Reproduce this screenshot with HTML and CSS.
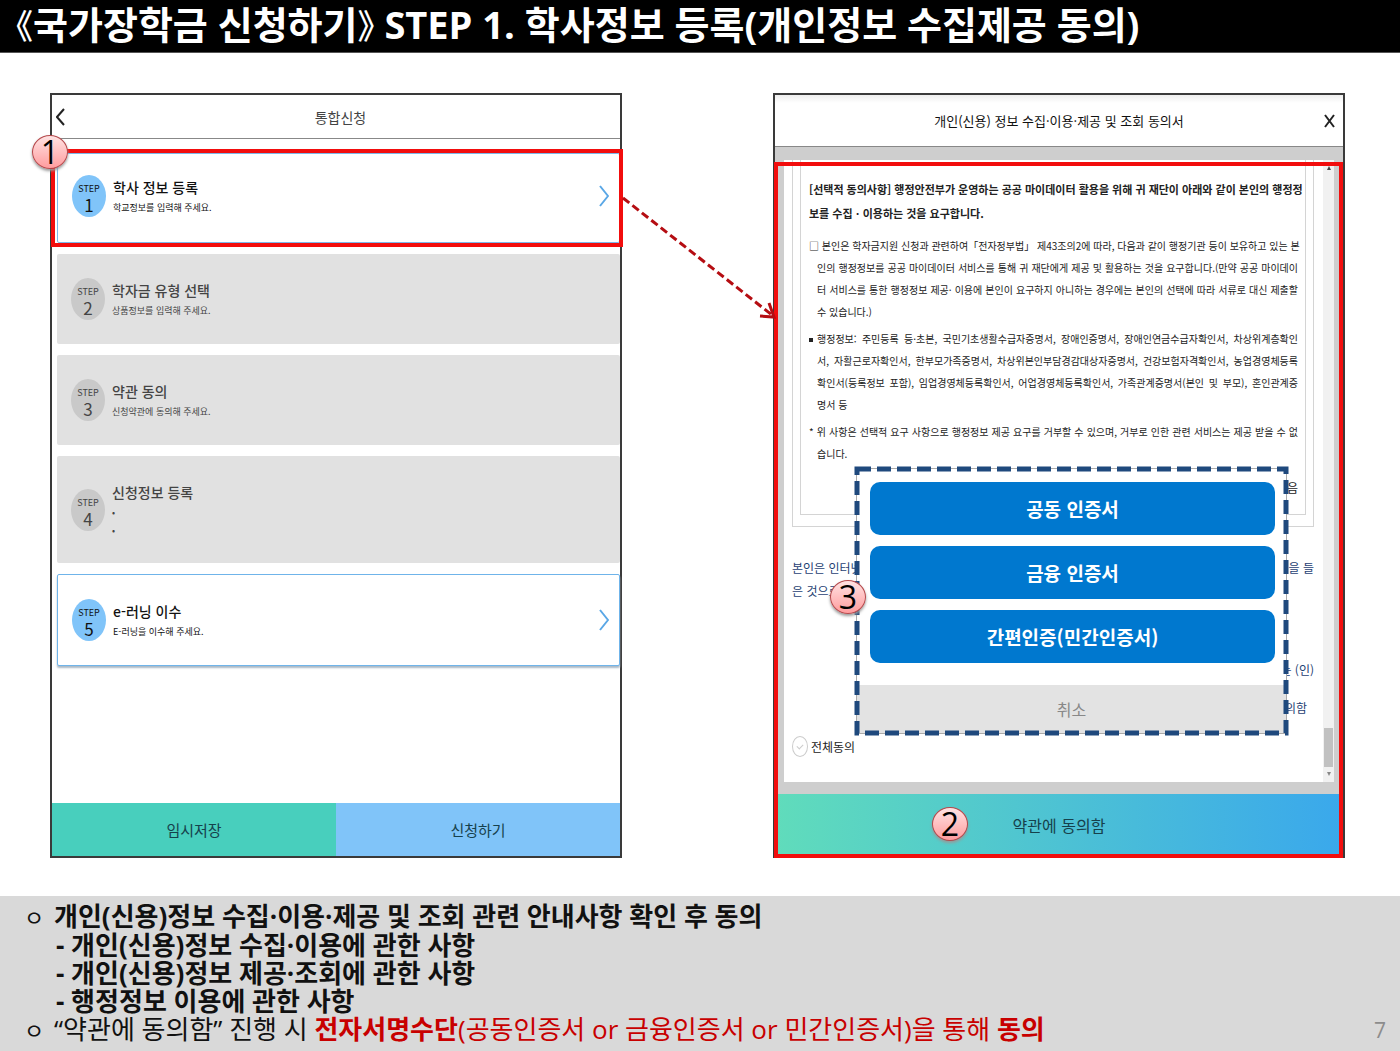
FILE: index.html
```
<!DOCTYPE html>
<html lang="ko">
<head>
    <meta charset="UTF-8">
    <meta name="viewport" content="width=device-width, initial-scale=1.0">
    <title>국가장학금 신청하기</title>
    <link rel="stylesheet" href="styles.css">
</head>
<body>
    <header class="slide-title">
        <h1><span class="bracket">《</span>국가장학금 신청하기<span class="bracket">》</span> STEP 1. 학사정보 등록(개인정보 수집제공 동의)</h1>
    </header>

    <main class="stage">
        <!-- 통합신청 화면 -->
        <section class="panel">
            <div class="panel-head apply-head">
                <button class="back" type="button" aria-label="뒤로">
                    <svg width="9" height="18" viewBox="0 0 9 18"><path d="M8 1 L1 9 L8 17"/></svg>
                </button>
                <h2>통합신청</h2>
            </div>

            <ol class="steps">
                <li class="step active current">
                    <span class="badge"><small>STEP</small><b>1</b></span>
                    <div class="step-text">
                        <h3>학사 정보 등록</h3>
                        <p>학교정보를 입력해 주세요.</p>
                    </div>
                    <svg class="chevron" width="10" height="22" viewBox="0 0 10 22"><path d="M1 1 L9 11 L1 21"/></svg>
                    <span class="highlight"></span>
                    <span class="marker marker-1">1</span>
                </li>
                <li class="step">
                    <span class="badge"><small>STEP</small><b>2</b></span>
                    <div class="step-text">
                        <h3>학자금 유형 선택</h3>
                        <p>상품정보를 입력해 주세요.</p>
                    </div>
                </li>
                <li class="step">
                    <span class="badge"><small>STEP</small><b>3</b></span>
                    <div class="step-text">
                        <h3>약관 동의</h3>
                        <p>신청약관에 동의해 주세요.</p>
                    </div>
                </li>
                <li class="step tall">
                    <span class="badge"><small>STEP</small><b>4</b></span>
                    <div class="step-text">
                        <h3>신청정보 등록</h3>
                        <p>•</p>
                        <p>•</p>
                    </div>
                </li>
                <li class="step active shadow">
                    <span class="badge"><small>STEP</small><b>5</b></span>
                    <div class="step-text">
                        <h3>e-러닝 이수</h3>
                        <p>E-러닝을 이수해 주세요.</p>
                    </div>
                    <svg class="chevron" width="10" height="22" viewBox="0 0 10 22"><path d="M1 1 L9 11 L1 21"/></svg>
                </li>
            </ol>

            <div class="actions">
                <button class="save" type="button">임시저장</button>
                <button class="submit" type="button">신청하기</button>
            </div>
        </section>

        <!-- 화살표 -->
        <svg class="arrow" width="154" height="126" viewBox="0 0 154 126">
            <path d="M1 2 L150 119" stroke-dasharray="8 4"/>
            <path d="M147 107 L152 121 L138 120"/>
        </svg>

        <!-- 동의서 화면 -->
        <section class="panel">
            <div class="panel-head consent-head">
                <h2>개인(신용) 정보 수집·이용·제공 및 조회 동의서</h2>
                <button class="close" type="button" aria-label="닫기">
                    <svg width="11" height="14" viewBox="0 0 11 14"><path d="M1 1 L10 13 M10 1 L1 13"/></svg>
                </button>
            </div>

            <div class="consent">
                <div class="doc">
                    <div class="doc-body">
                        <div class="frame">
                            <div class="terms">
                                <h3>
                                    <span>[선택적 동의사항] 행정안전부가 운영하는 공공 마이데이터 활용을 위해 귀 재단이 아래와 같이 본인의 행정정</span>
                                    <span>보를 수집ㆍ이용하는 것을 요구합니다.</span>
                                </h3>
                                <p>
                                    <span class="full first">□ 본인은 학자금지원 신청과 관련하여「전자정부법」 제43조의2에 따라, 다음과 같이 행정기관 등이 보유하고 있는 본</span>
                                    <span class="full">인의 행정정보를 공공 마이데이터 서비스를 통해 귀 재단에게 제공 및 활용하는 것을 요구합니다.(만약 공공 마이데이</span>
                                    <span class="full">터 서비스를 통한 행정정보 제공· 이용에 본인이 요구하지 아니하는 경우에는 본인의 선택에 따라 서류로 대신 제출할</span>
                                    <span>수 있습니다.)</span>
                                </p>
                                <p>
                                    <span class="full first"><i class="square"></i>행정정보: 주민등록 등·초본, 국민기초생활수급자증명서, 장애인증명서, 장애인연금수급자확인서, 차상위계층확인</span>
                                    <span class="full">서, 자활근로자확인서, 한부모가족증명서, 차상위본인부담경감대상자증명서, 건강보험자격확인서, 농업경영체등록</span>
                                    <span class="full">확인서(등록정보 포함), 임업경영체등록확인서, 어업경영체등록확인서, 가족관계증명서(본인 및 부모), 혼인관계증</span>
                                    <span>명서 등</span>
                                </p>
                                <p>
                                    <span class="full first">* 위 사항은 선택적 요구 사항으로 행정정보 제공 요구를 거부할 수 있으며, 거부로 인한 관련 서비스는 제공 받을 수 없</span>
                                    <span>습니다.</span>
                                </p>
                                <p class="choice">음</p>
                            </div>
                        </div>
                        <div class="statement">
                            <p><span>본인은 인터넷</span><span>것을 들</span></p>
                            <p><span>은 것으로</span></p>
                        </div>
                        <p class="sign">는 (인)</p>
                        <p class="agree">동의함</p>
                        <label class="all"><input type="checkbox">전체동의</label>
                    </div>
                    <div class="scrollbar"><i class="up"></i><i class="thumb"></i><i class="down"></i></div>
                </div>

                <button class="accept" type="button">약관에 동의함</button>
                <span class="highlight"></span>
                <span class="marker marker-2">2</span>

                <!-- 인증서 선택 팝업 -->
                <div class="popup">
                    <div class="certs">
                        <button type="button">공동 인증서</button>
                        <button type="button">금융 인증서</button>
                        <button type="button">간편인증(민간인증서)</button>
                    </div>
                    <button class="cancel" type="button">취소</button>
                    <svg class="dashes"><rect width="100%" height="100%"/></svg>
                    <span class="marker marker-3">3</span>
                </div>
            </div>
        </section>
    </main>

    <footer class="notes">
        <ul>
            <li class="strong"><span class="bullet">ㅇ</span>개인(신용)정보 수집·이용·제공 및 조회 관련 안내사항 확인 후 동의
                <ul>
                    <li>- 개인(신용)정보 수집·이용에 관한 사항</li>
                    <li>- 개인(신용)정보 제공·조회에 관한 사항</li>
                    <li>- 행정정보 이용에 관한 사항</li>
                </ul>
            </li>
            <li><span class="bullet">ㅇ</span>“약관에 동의함” 진행 시 <em><b>전자서명수단</b>(공동인증서 or 금융인증서 or 민간인증서)을 통해 <b>동의</b></em></li>
        </ul>
        <span class="page">7</span>
    </footer>
</body>
</html>
```
FILE: styles.css
```
* {
    margin: 0;
    padding: 0;
    box-sizing: border-box;
}

body {
    min-height: 100vh;
    display: flex;
    flex-direction: column;
    background: #fff;
    color: #111;
    font-family: "Noto Sans CJK KR", sans-serif;
}

button {
    border: 0;
    background: none;
    font-family: inherit;
    color: inherit;
    cursor: pointer;
}

ul, ol {
    list-style: none;
}

svg {
    display: block;
    fill: none;
}

/* 제목 */
.slide-title {
    height: 53px;
    background: #000;
    border-bottom: 1px solid #555;
    padding: 0 16px;
}

.slide-title h1 {
    color: #fff;
    font-family: "Open Sans", "Noto Sans CJK KR", sans-serif;
    font-size: 38px;
    font-weight: 700;
    line-height: 48px;
    white-space: nowrap;
}

.bracket {
    font-family: "Noto Sans CJK KR", sans-serif;
    font-size: 34px;
    font-weight: 500;
    font-feature-settings: "halt";
    line-height: 1;
}

.stage {
    flex: 1;
    display: grid;
    grid-template-columns: minmax(0, 1fr) 151px minmax(0, 1fr);
    padding: 40px 55px 38px 50px;
}

.panel {
    display: flex;
    flex-direction: column;
    border: 2px solid #3a3a3a;
}

.panel-head {
    display: flex;
    align-items: center;
    border-bottom: 1px solid #888;
}

.panel-head h2 {
    flex: 1;
    text-align: center;
    font-weight: 400;
}

.panel-head path {
    stroke: #222;
    stroke-width: 2;
}

.apply-head {
    height: 44px;
    padding: 0 4px;
}

.apply-head h2 {
    font-size: 14px;
    color: #444;
}

/* 단계 목록 */
.steps {
    display: flex;
    flex-direction: column;
    gap: 11px;
    padding: 14px 0 0 5px;
}

.step {
    position: relative;
    display: flex;
    align-items: center;
    gap: 7px;
    height: 90px;
    padding: 0 10px 0 14px;
    border-radius: 2px;
    background: #e1e1e1;
    color: #444;
}

.step.active {
    border: 1px solid #7cb8ea;
    background: #fff;
    color: #111;
}

.step.current {
    padding-bottom: 4px;
}

.step.tall {
    height: 107px;
}

.step.shadow {
    height: 92px;
    border-color: #6fb4ea;
    box-shadow: 0 2px 2px #aab9c6;
}

.badge {
    display: flex;
    flex-direction: column;
    align-items: center;
    width: 34px;
    height: 42px;
    padding-top: 8px;
    border-radius: 50%;
    background: #c9c9c9;
}

.active .badge {
    background: #80c4f9;
}

.badge small {
    font-size: 9px;
    line-height: 12px;
}

.badge b {
    font-size: 17px;
    font-weight: 400;
    line-height: 20px;
}

.step-text {
    flex: 1;
}

.step-text h3 {
    font-size: 14px;
    font-weight: 500;
    line-height: 24px;
}

.step-text p {
    font-size: 9px;
    line-height: 18px;
}

.chevron path {
    stroke: #5aa7e6;
    stroke-width: 2;
}

.actions {
    display: flex;
    margin-top: auto;
}

.actions button {
    flex: 1;
    height: 53px;
    font-size: 15px;
    color: #16414c;
}

.actions .save {
    background: #48cfbd;
}

.actions .submit {
    background: #80c4f9;
}

/* 강조 상자와 번호 */
.highlight {
    position: absolute;
    border: 4px solid #f20d0d;
    pointer-events: none;
}

.step .highlight {
    inset: -5px -4px -5px -7px;
}

.marker {
    position: absolute;
    width: 36px;
    height: 34px;
    border: 1px solid #b5484b;
    border-radius: 50%;
    background: linear-gradient(#ffe3e3, #ff9c9e);
    box-shadow: 0 2px 3px #999;
    color: #000;
    font-family: "Open Sans", sans-serif;
    font-size: 32px;
    line-height: 32px;
    text-align: center;
}

.marker-1 {
    left: -26px;
    top: -19px;
}

.marker-2 {
    left: 157px;
    bottom: 15px;
}

.marker-3 {
    left: -27px;
    top: 111px;
}

.arrow {
    margin-top: 103px;
    z-index: 2;
}

.arrow path {
    stroke: #b50d12;
    stroke-width: 3;
}

/* 동의서 */
.consent-head {
    height: 52px;
    padding: 0 8px 0 19px;
    background: linear-gradient(#eee, #fff 8px);
}

.consent-head h2 {
    font-size: 13px;
}

.consent {
    position: relative;
    flex: 1;
    display: flex;
    flex-direction: column;
    background: #cecece;
}

.consent > .highlight {
    inset: 15px 0 -2px -1px;
}

.doc {
    flex: 1;
    display: flex;
    margin: 13px 9px 12px;
    background: #fff;
}

.doc-body {
    flex: 1;
    min-width: 0;
    padding: 0 9px 0 8px;
    font-size: 12px;
    line-height: 23px;
    color: #1f3f73;
}

.frame {
    padding: 0 7px 11px;
    border: 1px solid #d4d4d4;
    border-top: 0;
}

.terms {
    padding: 17px 7px 15px 8px;
    border: 1px solid #d4d4d4;
    border-top: 0;
    color: #222;
    font-size: 10px;
    line-height: 22px;
    white-space: nowrap;
}

.terms h3 {
    margin-bottom: 10px;
    font-size: 11px;
    line-height: 24px;
}

.terms p {
    margin-bottom: 5px;
    padding-left: 8px;
}

.terms span {
    display: block;
}

.terms .full {
    text-align-last: justify;
}

.terms .first {
    margin-left: -8px;
}

.square {
    display: inline-block;
    width: 4px;
    height: 4px;
    margin-right: 4px;
    background: #222;
    vertical-align: middle;
}

.terms .choice {
    margin: 12px 0 0;
    font-size: 12px;
    text-align: right;
}

.statement {
    margin-top: 29px;
}

.statement p {
    display: flex;
    justify-content: space-between;
}

.sign {
    margin-top: 56px;
    text-align: right;
}

.agree {
    margin-top: 15px;
    padding-right: 7px;
    text-align: right;
}

.all {
    display: flex;
    align-items: center;
    gap: 3px;
    margin-top: 16px;
    color: #222;
}

.all input {
    appearance: none;
    width: 16px;
    height: 21px;
    border: 1px solid #ccc;
    border-radius: 50%;
}

.all input::after {
    content: "";
    display: block;
    width: 3px;
    height: 5px;
    margin: 6px auto;
    border: solid #ccc;
    border-width: 0 1px 1px 0;
    transform: rotate(45deg);
}

.scrollbar {
    display: flex;
    flex-direction: column;
    align-items: center;
    width: 11px;
    padding: 6px 0;
    background: #f1f1f1;
}

.scrollbar i {
    border: 2px solid transparent;
}

.scrollbar .up {
    border-bottom: 4px solid #444;
    border-top: 0;
}

.scrollbar .thumb {
    width: 9px;
    height: 39px;
    margin: auto 0 5px;
    background: #c1c1c1;
    border: 0;
}

.scrollbar .down {
    border-top: 4px solid #888;
    border-bottom: 0;
}

.accept {
    height: 62px;
    background: linear-gradient(to right, #60dcbb, #3aa8ec);
    color: #16414c;
    font-size: 16px;
}

/* 팝업 */
.popup {
    position: absolute;
    top: 321px;
    left: 81px;
    right: 56px;
    border: 1px solid #aaa;
    background: #fff;
}

.certs {
    display: flex;
    flex-direction: column;
    gap: 11px;
    padding: 13px 11px 22px 13px;
}

.certs button {
    height: 53px;
    border-radius: 10px;
    background: #0078cf;
    color: #fff;
    font-size: 19px;
    font-weight: 700;
}

.cancel {
    display: block;
    width: 100%;
    height: 48px;
    background: #e3e3e3;
    color: #888;
    font-size: 16px;
}

.dashes {
    position: absolute;
    inset: 0;
    width: 100%;
    height: 100%;
    overflow: visible;
    pointer-events: none;
}

.dashes rect {
    stroke: #1f497d;
    stroke-width: 5;
    stroke-dasharray: 14 6;
}

/* 하단 안내 */
.notes {
    display: flex;
    justify-content: space-between;
    align-items: flex-end;
    padding: 6px 14px 7px 24px;
    background: #d9d9d9;
    font-family: "Open Sans", "Noto Sans CJK KR", sans-serif;
    font-size: 26px;
    line-height: 28px;
    white-space: nowrap;
}

.notes .strong {
    font-weight: 700;
}

.notes ul ul {
    padding-left: 32px;
}

.bullet {
    display: inline-block;
    width: 30px;
    font-size: 22px;
    font-weight: 400;
}

.notes em {
    color: #c80000;
    font-style: normal;
}

.page {
    color: #8c8c8c;
    font-size: 21px;
}
```
